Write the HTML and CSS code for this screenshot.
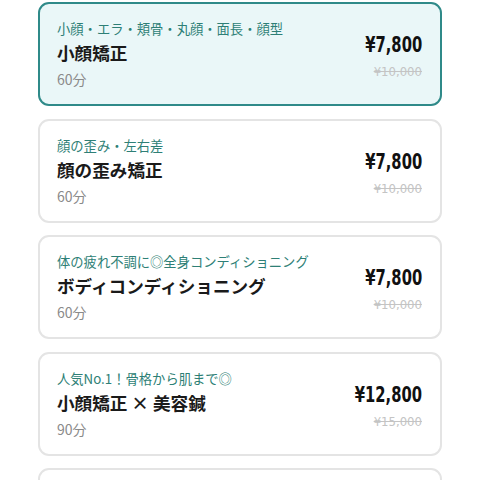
FILE: index.html
```html
<!DOCTYPE html>
<html lang="ja">
<head>
  <meta charset="UTF-8">
  <meta name="viewport" content="width=device-width, initial-scale=1.0">
  <title>メニュー</title>
  <link rel="stylesheet" href="styles.css">
</head>
<body>

  <div class="menu-list">
    <div class="menu-card selected">
      <div class="menu-info">
        <p class="menu-tag">小顔・エラ・頬骨・丸顔・面長・顔型</p>
        <h3 class="menu-name">小顔矯正</h3>
        <p class="menu-time">60分</p>
      </div>
      <div class="menu-price">
        <span class="price-now">¥7,800</span>
        <span class="price-old">¥10,000</span>
      </div>
    </div>

    <div class="menu-card">
      <div class="menu-info">
        <p class="menu-tag">顔の歪み・左右差</p>
        <h3 class="menu-name">顔の歪み矯正</h3>
        <p class="menu-time">60分</p>
      </div>
      <div class="menu-price">
        <span class="price-now">¥7,800</span>
        <span class="price-old">¥10,000</span>
      </div>
    </div>

    <div class="menu-card">
      <div class="menu-info">
        <p class="menu-tag">体の疲れ不調に◎全身コンディショニング</p>
        <h3 class="menu-name">ボディコンディショニング</h3>
        <p class="menu-time">60分</p>
      </div>
      <div class="menu-price">
        <span class="price-now">¥7,800</span>
        <span class="price-old">¥10,000</span>
      </div>
    </div>

    <div class="menu-card">
      <div class="menu-info">
        <p class="menu-tag">人気No.1！骨格から肌まで◎</p>
        <h3 class="menu-name">小顔矯正 × 美容鍼</h3>
        <p class="menu-time">90分</p>
      </div>
      <div class="menu-price">
        <span class="price-now">¥12,800</span>
        <span class="price-old">¥15,000</span>
      </div>
    </div>

    <div class="menu-card"></div>
  </div>

</body>
</html>
```

FILE: styles.css
```css
* {
  margin: 0;
  padding: 0;
  box-sizing: border-box;
}

body {
  background: #fff;
  font-family: 'Noto Sans CJK JP', 'Noto Sans', sans-serif;
  color: #1a1a1a;
  overflow: hidden;
}

.menu-list {
  display: flex;
  flex-direction: column;
  gap: 12.6px;
  padding: 2px 38px 0 38px;
}

.menu-card {
  display: flex;
  justify-content: space-between;
  align-items: center;
  flex-shrink: 0;
  height: 104px;
  padding: 0 18px 0 17px;
  background: #fff;
  border: 2px solid #e4e4e4;
  border-radius: 11px;
}

.menu-card.selected {
  background: #eaf7f8;
  border-color: #2f8a89;
}

.menu-info {
  padding-top: 2px;
}

.menu-tag {
  font-size: 13.3px;
  line-height: 18px;
  color: #2e7f76;
}

.menu-name {
  font-size: 17.6px;
  font-weight: 700;
  line-height: 26px;
  margin-top: 2px;
}

.menu-time {
  font-size: 14px;
  line-height: 22px;
  color: #8a8a8a;
  margin-top: 2px;
}

.menu-price {
  display: flex;
  flex-direction: column;
  align-items: flex-end;
  padding-top: 5px;
}

/* narrow bold figures, squeezed from the right edge */
.price-now {
  display: inline-block;
  font-family: 'DejaVu Sans Condensed', 'DejaVu Sans', sans-serif;
  font-stretch: condensed;
  font-size: 20.5px;
  font-weight: bold;
  line-height: 28px;
  color: #111;
  transform: scaleX(0.8);
  transform-origin: right center;
}

.price-old {
  font-family: 'DejaVu Sans Condensed', 'DejaVu Sans', sans-serif;
  font-stretch: condensed;
  font-size: 13px;
  line-height: 20px;
  margin-top: 3px;
  color: #c4c4c4;
  text-decoration: line-through;
}
```
